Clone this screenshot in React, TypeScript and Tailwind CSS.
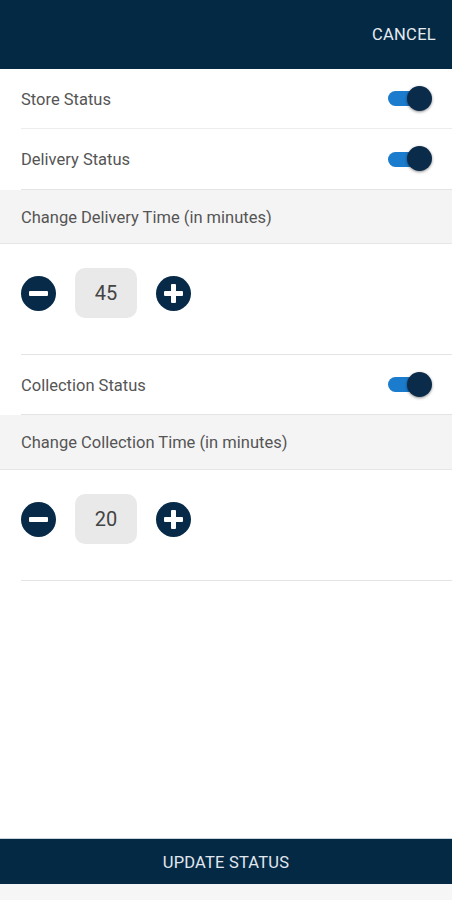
import React from "react";

const font = { fontFamily: "Roboto, 'Noto Sans', sans-serif" };

function Toggle() {
  return (
    <div className="relative w-[46px] h-[26px] flex items-center">
      <div className="ml-[1px] w-[36px] h-[15px] rounded-full bg-[#1b7bcc]" />
      <div className="absolute right-[1px] top-0 w-[25px] h-[25px] rounded-full bg-[#0b2b4a] shadow-[0_1px_3px_rgba(0,0,0,0.45)]" />
    </div>
  );
}

function Circle({ plus }: { plus?: boolean }) {
  return (
    <div className="w-[35px] h-[35px] rounded-full bg-[#062a48] relative flex items-center justify-center">
      <div className="w-[19px] h-[5px] rounded-[1px] bg-white" />
      {plus && <div className="absolute w-[5px] h-[19px] rounded-[1px] bg-white" />}
    </div>
  );
}

function Stepper({ value }: { value: number }) {
  return (
    <div className="flex items-start gap-[19px] pl-[21px] pt-[24px] h-[110px]">
      <div className="pt-[8px]">
        <Circle />
      </div>
      <div className="w-[62px] h-[50px] rounded-[10px] bg-[#e9e9e9] flex items-center justify-center text-[20px] text-[#444]">
        {value}
      </div>
      <div className="pt-[8px]">
        <Circle plus />
      </div>
    </div>
  );
}

const label = "text-[16.5px] text-[#555] pt-[3px]";

export default function App() {
  return (
    <div className="w-[452px] h-[900px] bg-white flex flex-col" style={font}>
      <div className="h-[69px] bg-[#042945] flex items-center justify-end pr-[16px] shrink-0">
        <span className="text-[16.5px] text-[#e6ebf0] tracking-[0.3px] pt-[2px]">CANCEL</span>
      </div>
      <div className="ml-[21px] border-b border-[#ececec] h-[60px] flex items-center justify-between pr-[19px]">
        <span className={label}>Store Status</span>
        <Toggle />
      </div>
      <div className="ml-[21px] border-b border-[#e4e4e4] h-[61px] flex items-center justify-between pr-[19px]">
        <span className={label}>Delivery Status</span>
        <Toggle />
      </div>
      <div className="h-[54px] bg-[#f4f4f4] border-b border-[#e6e6e6] flex items-center pl-[21px]">
        <span className={label}>Change Delivery Time (in minutes)</span>
      </div>
      <div className="ml-[21px] border-b border-[#e4e4e4]">
        <div className="-ml-[21px]">
          <Stepper value={45} />
        </div>
      </div>
      <div className="ml-[21px] border-b border-[#e4e4e4] h-[60px] flex items-center justify-between pr-[19px]">
        <span className={label}>Collection Status</span>
        <Toggle />
      </div>
      <div className="h-[55px] bg-[#f4f4f4] border-b border-[#e6e6e6] flex items-center pl-[21px]">
        <span className={label}>Change Collection Time (in minutes)</span>
      </div>
      <div className="ml-[21px] border-b border-[#e4e4e4]">
        <div className="-ml-[21px]">
          <Stepper value={20} />
        </div>
      </div>
      <div className="flex-1" />
      <div className="h-[46px] bg-[#042945] flex items-center justify-center shrink-0 border-t border-[#c9d3dd]">
        <span className="text-[16.5px] text-[#e1e7ee] tracking-[0.2px] pt-[3px]">UPDATE STATUS</span>
      </div>
      <div className="h-[16px] bg-[#f6f6f6] shrink-0" />
    </div>
  );
}
